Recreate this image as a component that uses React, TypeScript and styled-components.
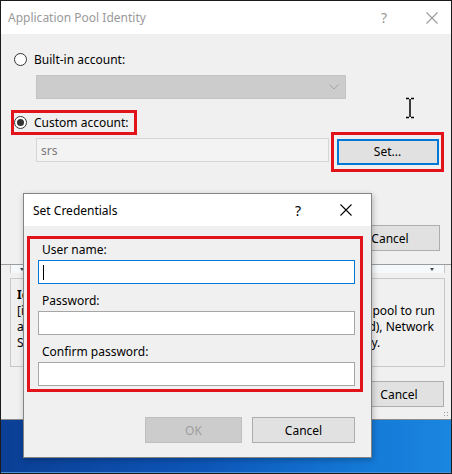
import React from "react"
import styled, { createGlobalStyle } from "styled-components"

const GlobalStyle = createGlobalStyle`
  html, body {
    margin: 0;
    padding: 0;
    background: #ffffff;
  }
  body {
    font-family: "Noto Sans", "Open Sans", Arial, sans-serif;
    font-size: 12px;
    color: #000;
  }
  * {
    box-sizing: border-box;
  }
`

const RED = "#e3131b"

const Frame = styled.div`
  position: relative;
  width: 452px;
  height: 474px;
  border: 1px solid #1b1b1b;
  overflow: hidden;
  display: flex;
  flex-direction: column;
  background: #f0f0f0;
`

const IdentityWindow = styled.div`
  height: 264px;
  flex-shrink: 0;
  background: #f0f0f0;
  border-bottom: 1px solid #9c9c9c;
  display: flex;
  flex-direction: column;
`

const TitleBar = styled.div<{ $height: number; $dim?: boolean; $pad: number }>`
  height: ${(p) => p.$height}px;
  flex-shrink: 0;
  background: #ffffff;
  display: flex;
  align-items: center;
  padding-left: ${(p) => p.$pad}px;
  color: ${(p) => (p.$dim ? "#9a9a9a" : "#000000")};
  font-size: 12px;
`

const TitleText = styled.span`
  flex: 1;
`

const TitleButton = styled.span<{ $width: number; $dim?: boolean }>`
  width: ${(p) => p.$width}px;
  display: flex;
  justify-content: center;
  align-items: center;
  font-size: 14px;
  color: ${(p) => (p.$dim ? "#9a9a9a" : "#000000")};
`

const IdentityBody = styled.div`
  flex: 1;
  display: flex;
  flex-direction: column;
  padding-top: 16px;
`

const RadioRow = styled.div<{ $highlight?: boolean }>`
  display: flex;
  align-items: center;
  gap: 7px;
  height: ${(p) => (p.$highlight ? 25 : 18)}px;
  margin-left: ${(p) => (p.$highlight ? 10 : 0)}px;
  margin-top: ${(p) => (p.$highlight ? 11 : 0)}px;
  width: ${(p) => (p.$highlight ? "126px" : "auto")};
  border: ${(p) => (p.$highlight ? `3px solid ${RED}` : "none")};
  padding-left: ${(p) => (p.$highlight ? 0 : 13)}px;
`

const Radio = styled.span<{ $checked?: boolean }>`
  width: 13px;
  height: 13px;
  border-radius: 50%;
  border: 1px solid #333333;
  background: #ffffff;
  display: flex;
  align-items: center;
  justify-content: center;
  flex-shrink: 0;

  &::after {
    content: "";
    width: 7px;
    height: 7px;
    border-radius: 50%;
    background: ${(p) => (p.$checked ? "#333333" : "transparent")};
  }
`

const Select = styled.div`
  margin: 7px 0 0 35px;
  width: 310px;
  height: 24px;
  background: #cccccc;
  border: 1px solid #c4c4c4;
  display: flex;
  justify-content: flex-end;
  align-items: center;
  padding-right: 6px;
`

const FieldRow = styled.div`
  display: flex;
  align-items: flex-start;
  margin-top: 3px;
  padding-left: 35px;
`

const ReadOnlyField = styled.div`
  width: 293px;
  height: 24px;
  background: #f3f3f3;
  border: 1px solid #d6d6d6;
  color: #7a7a7a;
  padding-left: 4px;
  display: flex;
  align-items: center;
`

const SetHighlight = styled.div`
  margin: -6px 0 0 2px;
  width: 113px;
  height: 40px;
  border: 3px solid ${RED};
  display: flex;
  align-items: center;
  justify-content: center;
  padding-bottom: 1px;
`

const WinButton = styled.div<{ $width: number; $focused?: boolean; $disabled?: boolean }>`
  width: ${(p) => p.$width}px;
  height: 26px;
  display: flex;
  align-items: center;
  justify-content: center;
  background: ${(p) => (p.$disabled ? "#cccccc" : "#e1e1e1")};
  border: ${(p) =>
    p.$focused ? "2px solid #0078d7" : `1px solid ${p.$disabled ? "#bfbfbf" : "#adadad"}`};
  color: ${(p) => (p.$disabled ? "#a0a0a0" : "#000000")};
  font-size: 12px;
`

const ButtonRow = styled.div<{ $top: number; $right: number; $gap?: number }>`
  display: flex;
  justify-content: flex-end;
  gap: ${(p) => p.$gap ?? 8}px;
  margin-top: ${(p) => p.$top}px;
  padding-right: ${(p) => p.$right}px;
`

const SettingsPane = styled.div`
  height: 155px;
  flex-shrink: 0;
  background: #f0f0f0;
  border-bottom: 1px solid #8a8a8a;
  display: flex;
  flex-direction: column;
  position: relative;
`

const GridStrip = styled.div`
  margin-left: 9px;
  width: 435px;
  height: 8px;
  background: #f6f9fc;
  border-left: 1px solid #c8c8c8;
  border-right: 1px solid #c8c8c8;
  display: flex;
  justify-content: space-between;
  align-items: center;
  padding: 0 10px 0 9px;
`

const Arrow = styled.span`
  width: 0;
  height: 0;
  border-left: 2px solid transparent;
  border-right: 2px solid transparent;
  border-top: 3px solid #444444;
`

const DescBox = styled.div`
  margin: 5px 0 0 9px;
  width: 435px;
  height: 89px;
  border: 1px solid #c8c8c8;
  padding: 8px 0 0 6px;
  overflow: hidden;
  line-height: 16px;
  white-space: nowrap;
`

const DescTitle = styled.div`
  font-weight: bold;
`

// a wrapped line of the description: its start and end sit at the box edges
const DescLine = styled.div<{ $width?: number }>`
  display: flex;
  justify-content: space-between;
  gap: 4px;
  width: ${(p) => (p.$width ? `${p.$width}px` : "auto")};
  height: 16px;
  overflow: hidden;
`

const Grip = styled.div`
  position: absolute;
  right: 2px;
  bottom: 2px;
  width: 6px;
  height: 6px;
  background-image: radial-gradient(#9a9a9a 0.8px, transparent 1px);
  background-size: 3px 3px;
`

const Desktop = styled.div`
  flex: 1;
  background: linear-gradient(90deg, #0b3f95 0%, #0d56b8 45%, #1479d6 80%, #1a86e0 100%);
  border-bottom: 1px solid #4a8fd8;
`

const Cursor = styled.svg`
  position: absolute;
  left: 403px;
  top: 96px;
`

const CredDialog = styled.div`
  position: absolute;
  left: 22px;
  top: 192px;
  width: 349px;
  height: 265px;
  background: #f0f0f0;
  border: 1px solid #858585;
  box-shadow: 1px 2px 6px rgba(0, 0, 0, 0.25);
  display: flex;
  flex-direction: column;
`

const CredBody = styled.div`
  flex: 1;
  display: flex;
  flex-direction: column;
  padding-top: 10px;
`

const CredHighlight = styled.div`
  margin-left: 3px;
  width: 336px;
  border: 3px solid ${RED};
  padding: 3px 4px 3px 8px;
  display: flex;
  flex-direction: column;
  gap: 9px;
`

const FieldGroup = styled.div`
  display: flex;
  flex-direction: column;
`

const FieldLabel = styled.label`
  height: 16px;
  line-height: 16px;
  margin: 0 0 2px 4px;
`

const TextInput = styled.div<{ $focused?: boolean }>`
  width: 317px;
  height: 24px;
  background: #ffffff;
  border: 1px solid ${(p) => (p.$focused ? "#0078d7" : "#a6a6a6")};
  display: flex;
  align-items: center;
  padding-left: 4px;
`

const Caret = styled.span`
  width: 1px;
  height: 15px;
  background: #000000;
`

const CloseIcon = ({ color }: { color: string }) => (
  <svg width="12" height="12" viewBox="0 0 12 12">
    <path d="M0.5 0.5 L11.5 11.5 M11.5 0.5 L0.5 11.5" stroke={color} strokeWidth="1.1" fill="none" />
  </svg>
)

const descLines = [
  { parts: ["[identityType] Configures the application", "pool to run"], width: 418 },
  { parts: ["as built-in account, i.e. Application Pool Identity", "(recommended), Network"], width: 417 },
  { parts: ["Service, Local System, Local Service, or as a specific user identity."] },
]

const App = () => (
  <>
    <GlobalStyle />
    <Frame>
      <IdentityWindow>
        <TitleBar $height={33} $pad={7} $dim>
          <TitleText>Application Pool Identity</TitleText>
          <TitleButton $width={58} $dim>?</TitleButton>
          <TitleButton $width={38} $dim>
            <CloseIcon color="#9a9a9a" />
          </TitleButton>
        </TitleBar>
        <IdentityBody>
          <RadioRow>
            <Radio />
            Built-in account:
          </RadioRow>
          <Select>
            <svg width="10" height="6" viewBox="0 0 10 6">
              <path d="M0.5 0.5 L5 5 L9.5 0.5" stroke="#a6a6a6" fill="none" />
            </svg>
          </Select>
          <RadioRow $highlight>
            <Radio $checked />
            Custom account:
          </RadioRow>
          <FieldRow>
            <ReadOnlyField>srs</ReadOnlyField>
            <SetHighlight>
              <WinButton $width={102} $focused>
                Set...
              </WinButton>
            </SetHighlight>
          </FieldRow>
          <ButtonRow $top={53} $right={11}>
            <WinButton $width={84}>OK</WinButton>
            <WinButton $width={100}>Cancel</WinButton>
          </ButtonRow>
        </IdentityBody>
      </IdentityWindow>

      <SettingsPane>
        <GridStrip>
          <Arrow />
          <Arrow />
        </GridStrip>
        <DescBox>
          <DescTitle>Identity</DescTitle>
          {descLines.map((line) => (
            <DescLine key={line.parts[0]} $width={line.width}>
              {line.parts.map((part) => (
                <span key={part}>{part}</span>
              ))}
            </DescLine>
          ))}
        </DescBox>
        <ButtonRow $top={14} $right={7}>
          <WinButton $width={90}>Cancel</WinButton>
        </ButtonRow>
        <Grip />
      </SettingsPane>

      <Desktop />

      <Cursor width="12" height="22" viewBox="0 0 12 22">
        <path
          d="M2 1.5 H5 M7 1.5 H10 M6 2 V20 M2 20.5 H5 M7 20.5 H10"
          stroke="#000"
          strokeWidth="1.5"
          fill="none"
        />
      </Cursor>

      <CredDialog>
        <TitleBar $height={32} $pad={9}>
          <TitleText>Set Credentials</TitleText>
          <TitleButton $width={46}>?</TitleButton>
          <TitleButton $width={50}>
            <CloseIcon color="#000" />
          </TitleButton>
        </TitleBar>
        <CredBody>
          <CredHighlight>
            <FieldGroup>
              <FieldLabel>User name:</FieldLabel>
              <TextInput $focused>
                <Caret />
              </TextInput>
            </FieldGroup>
            <FieldGroup>
              <FieldLabel>Password:</FieldLabel>
              <TextInput />
            </FieldGroup>
            <FieldGroup>
              <FieldLabel>Confirm password:</FieldLabel>
              <TextInput />
            </FieldGroup>
          </CredHighlight>
          <ButtonRow $top={25} $right={16} $gap={10}>
            <WinButton $width={97} $disabled>
              OK
            </WinButton>
            <WinButton $width={103}>Cancel</WinButton>
          </ButtonRow>
        </CredBody>
      </CredDialog>
    </Frame>
  </>
)

export default App
